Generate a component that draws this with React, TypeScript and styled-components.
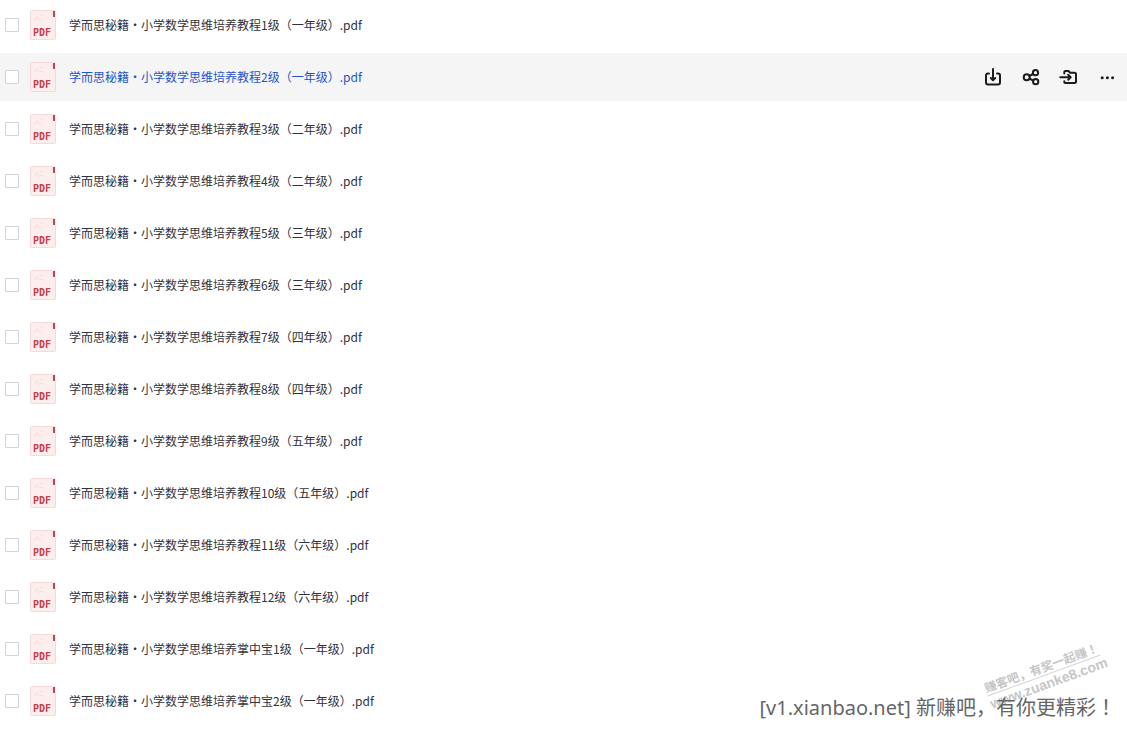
import React from "react";
import styled, { createGlobalStyle, css } from "styled-components";

const GlobalStyle = createGlobalStyle`
  * { box-sizing: border-box; }
  body {
    margin: 0;
    background: #ffffff;
    color: #30323c;
    font-family: "Noto Sans CJK SC", sans-serif;
    font-size: 12px;
    line-height: 18px;
  }
`;

const Page = styled.main`
  position: relative;
  padding: 1px 0 4px;
  overflow: hidden;
`;

const FileList = styled.ul`
  display: flex;
  flex-direction: column;
  gap: 4px;
  margin: 0;
  padding: 0;
  list-style: none;
`;

const FileRow = styled.li<{ $active?: boolean }>`
  display: flex;
  align-items: center;
  height: 48px;
  padding: 0 10px 0 5px;
  background: ${(p) => (p.$active ? "#f5f5f5" : "transparent")};
`;

const Checkbox = styled.input`
  appearance: none;
  flex: none;
  width: 14px;
  height: 14px;
  margin: 0 10px 0 0;
  border: 1px solid #d3d3d6;
  border-radius: 1px;
  background: #ffffff;

  &:checked {
    background: #1f5ad8;
  }
`;

const FileIcon = styled.svg`
  flex: none;
  width: 28px;
  height: 32px;
  margin-right: 12px;
`;

const FileName = styled.a<{ $active?: boolean }>`
  flex: 1;
  color: ${(p) => (p.$active ? "#1d55c9" : "#30323c")};
  text-decoration: none;
  white-space: nowrap;
`;

const Actions = styled.div`
  display: flex;
  gap: 18px;
`;

const ActionButton = styled.button`
  display: flex;
  width: 20px;
  height: 20px;
  padding: 0;
  border: 0;
  background: none;
  color: #1c1c1e;
  cursor: pointer;
`;

const strokes = css`
  fill: none;
  stroke: currentColor;
  stroke-width: 2;
  stroke-linecap: round;
  stroke-linejoin: round;
`;

const Glyph = styled.svg`
  width: 20px;
  height: 20px;
  ${strokes}
`;

const SiteCredit = styled.p`
  position: absolute;
  right: 11px;
  bottom: 7px;
  margin: 0;
  color: #666666;
  font-family: "Noto Sans", "Noto Sans CJK SC", sans-serif;
  font-size: 20px;
  line-height: 28px;
  white-space: nowrap;
`;

const CenteredMark = styled.span`
  font-family: "Noto Sans CJK JP", sans-serif;
`;

const Stamp = styled.div`
  position: absolute;
  right: 23px;
  bottom: 37px;
  width: 120px;
  color: #c6c6c6;
  font-weight: 700;
  line-height: 16px;
  white-space: nowrap;
  transform: rotate(-20deg);
`;

const StampTitle = styled.div`
  border-bottom: 1px solid #d4d4d4;
`;

const StampSite = styled.div`
  font-family: "Liberation Sans", sans-serif;
  font-size: 14px;
`;

function PdfIcon() {
  return (
    <FileIcon viewBox="0 0 28 32" aria-hidden="true">
      <rect x="1.5" y="1.5" width="25" height="29" rx="1" fill="#fdeeee" stroke="#f3dada" />
      <path d="M5 12l3-5 1 4 4-1M11 6l3 1" fill="none" stroke="#f6dfe0" />
      <path d="M22 1h5v8l-5-4z" fill="#fbe3e4" />
      <path d="M24 2h2v6h-2z" fill="#b5485a" />
      <text
        x="13"
        y="27"
        textAnchor="middle"
        fill="#c93f48"
        fontFamily="'DejaVu Sans Mono', monospace"
        fontSize="10"
        fontWeight="700"
      >
        PDF
      </text>
    </FileIcon>
  );
}

const actions = [
  {
    label: "下载",
    glyph: (
      <path d="M6 6.500H5Q3 6.500 3 8.500V15.500Q3 17.500 5 17.500H15Q17 17.500 17 15.500V8.500Q17 6.500 15 6.500H14M10 2V13M7.800 11L10 13.200L12.200 11" />
    ),
  },
  {
    label: "分享",
    glyph: (
      <>
        <circle cx="5.700" cy="10.300" r="3" />
        <circle cx="14.500" cy="5.700" r="2.600" />
        <circle cx="14.700" cy="14.700" r="2.600" />
        <path d="M8.500 8.900L12 7M8.500 11.700L12.200 13.500" />
      </>
    ),
  },
  {
    label: "移动",
    glyph: (
      <path d="M5.300 6.500V5Q5.300 4 6.300 4H9.500L11 5.700H15.500Q17 5.700 17 7.200V14.500Q17 16 15.500 16H6.300Q5.300 16 5.300 15V14.300M1.300 10.300H11.500M9.200 7.800L11.700 10.300L9.200 12.800" />
    ),
  },
  {
    label: "更多",
    glyph: (
      <g fill="currentColor" stroke="none">
        <circle cx="5.200" cy="10.700" r="1.500" />
        <circle cx="10.400" cy="10.700" r="1.500" />
        <circle cx="15.600" cy="10.700" r="1.500" />
      </g>
    ),
  },
];

const grades = ["一", "一", "二", "二", "三", "三", "四", "四", "五", "五", "六", "六"];

const files = [
  ...grades.map((grade, i) => `学而思秘籍・小学数学思维培养教程${i + 1}级（${grade}年级）.pdf`),
  "学而思秘籍・小学数学思维培养掌中宝1级（一年级）.pdf",
  "学而思秘籍・小学数学思维培养掌中宝2级（一年级）.pdf",
];

const activeIndex = 1;

export default function App() {
  return (
    <>
      <GlobalStyle />
      <Page>
        <FileList>
          {files.map((name, i) => {
            const active = i === activeIndex;
            return (
              <FileRow key={name} $active={active}>
                <Checkbox type="checkbox" aria-labelledby={`file-${i}`} />
                <PdfIcon />
                <FileName id={`file-${i}`} href={`#file-${i}`} $active={active}>
                  {name}
                </FileName>
                {active && (
                  <Actions>
                    {actions.map((action) => (
                      <ActionButton key={action.label} type="button" aria-label={action.label}>
                        <Glyph viewBox="0 0 20 20" aria-hidden="true">
                          {action.glyph}
                        </Glyph>
                      </ActionButton>
                    ))}
                  </Actions>
                )}
              </FileRow>
            );
          })}
        </FileList>
        <Stamp>
          <StampTitle>
            赚客吧，有奖一起赚<CenteredMark>！</CenteredMark>
          </StampTitle>
          <StampSite>www.zuanke8.com</StampSite>
        </Stamp>
        <SiteCredit>
          [v1.xianbao.net] 新赚吧，有你更精彩<CenteredMark>！</CenteredMark>
        </SiteCredit>
      </Page>
    </>
  );
}
